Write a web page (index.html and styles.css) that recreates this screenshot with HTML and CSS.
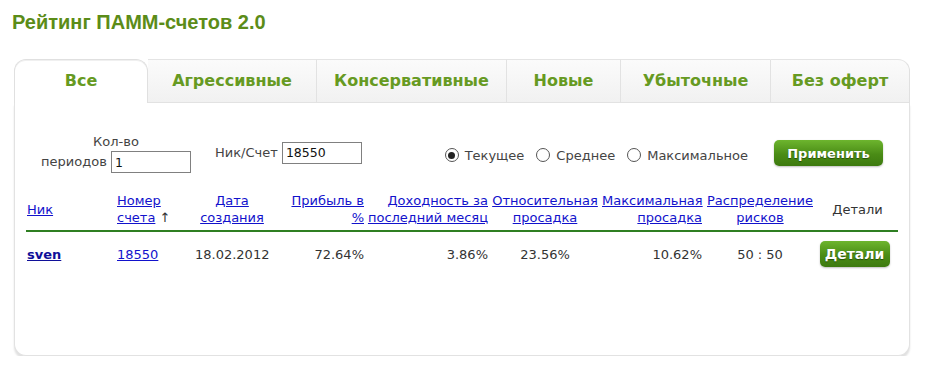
FILE: index.html
```html
<!DOCTYPE html>
<html lang="ru">
<head>
    <meta charset="UTF-8" />
    <meta name="viewport" content="width=device-width, initial-scale=1.0" />
    <title>Рейтинг ПАММ-счетов 2.0</title>
    <link rel="stylesheet" href="styles.css">
</head>
<body>
  <h1 class="title">Рейтинг ПАММ-счетов 2.0</h1>

  <div class="rating">
    <ul class="tabs">
      <li class="tab active" style="width: 134px;">Все</li>
      <li class="tab" style="width: 168px;">Агрессивные</li>
      <li class="tab" style="width: 190px;">Консервативные</li>
      <li class="tab" style="width: 114px;">Новые</li>
      <li class="tab" style="width: 150px;">Убыточные</li>
      <li class="tab last">Без оферт</li>
    </ul>

    <div class="panel">
      <div class="filter">
        <div class="field periods">
          Кол-во<br>
          периодов <input type="text" class="inp" value="1">
        </div>
        <div class="field nick">
          Ник/Счет <input type="text" class="inp" value="18550">
        </div>
        <div class="radios">
          <label><input type="radio" name="mode" checked> Текущее</label>
          <label><input type="radio" name="mode"> Среднее</label>
          <label><input type="radio" name="mode"> Максимальное</label>
        </div>
        <button class="btn apply">Применить</button>
      </div>

      <table class="grid">
        <thead>
          <tr>
            <th class="left" style="width: 90px;"><a href="#">Ник</a></th>
            <th class="left" style="width: 78px;"><a href="#">Номер<br>счета</a> &uarr;</th>
            <th style="width: 76px;"><a href="#">Дата<br>создания</a></th>
            <th class="right" style="width: 95px;"><a href="#">Прибыль в<br>%</a></th>
            <th class="right" style="width: 124px;"><a href="#">Доходность за<br>последний месяц</a></th>
            <th style="width: 112px;"><a href="#">Относительная<br>просадка</a></th>
            <th class="right" style="width: 102px;"><a href="#">Максимальная<br>просадка</a></th>
            <th style="width: 114px;"><a href="#">Распределение<br>рисков</a></th>
            <th>Детали</th>
          </tr>
        </thead>
        <tbody>
          <tr>
            <td class="left"><a href="#" class="nick-link">sven</a></td>
            <td class="left"><a href="#">18550</a></td>
            <td>18.02.2012</td>
            <td class="right">72.64%</td>
            <td class="right">3.86%</td>
            <td>23.56%</td>
            <td class="right">10.62%</td>
            <td>50 : 50</td>
            <td><button class="btn details">Детали</button></td>
          </tr>
        </tbody>
      </table>
    </div>
  </div>
</body>
</html>
```

FILE: styles.css
```css
body {
  margin: 0;
  padding: 0;
  background: #ffffff;
  font-family: "DejaVu Sans", Verdana, sans-serif;
  font-size: 12px;
  color: #333333;
}

.title {
  margin: 11px 0 0 12px;
  font-family: "Liberation Sans", Arial, sans-serif;
  font-size: 20px;
  font-weight: bold;
  color: #5b8c18;
  line-height: 22px;
}

.rating {
  width: 896px;
  margin: 26px 0 0 14px;
}

/* вкладки */
.tabs {
  display: flex;
  margin: 0;
  padding: 0;
  list-style: none;
}
.tab {
  box-sizing: border-box;
  height: 44px;
  line-height: 42px;
  text-align: center;
  font-size: 16px;
  font-weight: bold;
  color: #669a22;
  background: linear-gradient(#fbfbfb, #f1f1f1);
  border-top: 1px solid #e4e4e4;
  border-left: 1px solid #e2e2e2;
  border-bottom: 1px solid #e2e2e2;
}
.tab.active {
  background: #ffffff;
  border: 1px solid #e0e0e0;
  border-bottom: none;
  border-top-left-radius: 12px;
  border-top-right-radius: 12px;
  box-shadow: inset 0 1px 0 #f0f0f0;
}
.tab.active + .tab {
  border-left: none;
}
.tab.last {
  flex: 1;
  border-right: 1px solid #e0e0e0;
  border-top-right-radius: 12px;
}

.panel {
  height: 252px;
  border: 1px solid #e2e2e2;
  border-top: none;
  border-bottom-left-radius: 12px;
  border-bottom-right-radius: 12px;
  box-shadow: 0 3px 2px rgba(0, 0, 0, 0.12);
  background: #ffffff;
}

/* фильтр */
.filter {
  display: flex;
  align-items: center;
  padding: 28px 26px 0 12px;
  height: 44px;
  font-size: 13px;
}
.field {
  color: #444444;
}
.periods {
  width: 178px;
  text-align: center;
  line-height: 18px;
}
.nick {
  margin-left: 10px;
  margin-top: -1px;
}
.inp {
  box-sizing: border-box;
  width: 80px;
  height: 22px;
  padding: 1px 3px;
  border: 1px solid #808080;
  font-family: "DejaVu Sans", Verdana, sans-serif;
  font-size: 12.5px;
  color: #111111;
  vertical-align: middle;
}
.radios {
  margin-left: auto;
  margin-top: 4px;
  color: #444444;
  display: flex;
  gap: 12px;
}
.radios label {
  display: flex;
  align-items: center;
  gap: 6px;
}
.radios input {
  appearance: none;
  -webkit-appearance: none;
  margin: 0;
  width: 14px;
  height: 14px;
  border: 1px solid #555555;
  border-radius: 50%;
  background: #ffffff;
  position: relative;
}
.radios input:checked::after {
  content: "";
  position: absolute;
  left: 2.5px;
  top: 2.5px;
  width: 7px;
  height: 7px;
  border-radius: 50%;
  background: #222222;
}

.btn {
  border: none;
  border-radius: 5px;
  background: linear-gradient(#6db52e, #4a8c16 55%, #3d7a0f);
  color: #ffffff;
  font-family: "DejaVu Sans", Verdana, sans-serif;
  font-weight: bold;
  text-shadow: 0 1px 1px #274d08;
  box-shadow: 0 1px 2px rgba(0, 0, 0, 0.25);
  cursor: pointer;
}
.apply {
  margin-left: 26px;
  margin-top: 0;
  width: 109px;
  height: 26px;
  font-size: 13px;
}
.details {
  width: 70px;
  height: 26px;
  margin-right: 6px;
  font-size: 14px;
  padding: 0;
}

/* таблица */
.grid {
  width: 872px;
  margin: 17px 0 0 11px;
  border-collapse: collapse;
  table-layout: fixed;
  font-size: 13px;
}
.grid th {
  box-sizing: border-box;
  font-weight: normal;
  text-align: center;
  white-space: nowrap;
  padding: 0 1px 4px;
  line-height: 17px;
  border-bottom: 2px solid #2f7f22;
  color: #333333;
}
.grid td {
  text-align: center;
  padding: 9px 1px 0;
  line-height: 27px;
  color: #333333;
}
.grid .left {
  text-align: left;
}
.grid .right {
  text-align: right;
}
.grid a {
  color: #1212cc;
}
.grid .nick-link {
  font-weight: bold;
  color: #101099;
}
```
